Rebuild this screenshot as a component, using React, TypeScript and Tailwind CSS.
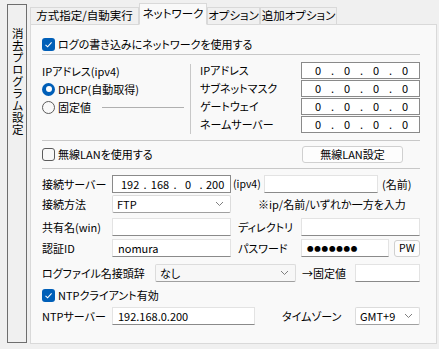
import React from 'react';

function CheckBox({ checked, label }: { checked?: boolean; label: string }) {
  return (
    <div className="flex items-center h-[16px]">
      {checked ? (
        <span className="w-[13px] h-[13px] rounded-[3px] bg-[#005fb8] flex items-center justify-center">
          <svg width="9" height="9" viewBox="0 0 9 9">
            <path d="M1.5 4.8 L3.6 6.8 L7.6 2.3" fill="none" stroke="#fff" strokeWidth="1.1" />
          </svg>
        </span>
      ) : (
        <span className="w-[13px] h-[13px] rounded-[3px] border border-[#5c5c5c] bg-[#f9f9f9]" />
      )}
      <span className="ml-[3px]">{label}</span>
    </div>
  );
}

function Radio({ checked, label }: { checked?: boolean; label: string }) {
  return (
    <div className="flex items-center h-[18px]">
      {checked ? (
        <span className="w-[13px] h-[13px] rounded-full bg-[#005fb8] flex items-center justify-center">
          <span className="w-[6px] h-[6px] rounded-full bg-white" />
        </span>
      ) : (
        <span className="w-[13px] h-[13px] rounded-full border border-[#5c5c5c] bg-[#f9f9f9]" />
      )}
      <span className="ml-[3px]">{label}</span>
    </div>
  );
}

function IpBox() {
  return (
    <div className="w-[119px] h-[17px] bg-white border border-[#8a8a8a] flex items-center pl-[12px]">
      {['0', '0', '0', '0'].map((v, i) => (
        <React.Fragment key={i}>
          <span className="w-[8px] text-center">{v}</span>
          {i < 3 && <span className="w-[21px] text-center">.</span>}
        </React.Fragment>
      ))}
    </div>
  );
}

function TextBox({ w, value }: { w: string; value?: string }) {
  return (
    <div className={`${w} h-[18px] bg-white border border-[#e3e3e3] border-b-[#8a8a8a] flex items-center pl-[5px]`}>
      {value}
    </div>
  );
}

function Select({ w, value, gray }: { w: string; value: string; gray?: boolean }) {
  return (
    <div className={`${w} h-[18px] ${gray ? 'bg-[#f7f7f7]' : 'bg-white'} border border-[#dcdcdc] border-b-[#a0a0a0] rounded-[2px] flex items-center pl-[4px] pr-[6px]`}>
      <span className="flex-1">{value}</span>
      <svg width="9" height="6" viewBox="0 0 9 6">
        <path d="M1 1 L4.5 4.5 L8 1" fill="none" stroke="#707070" strokeWidth="0.9" />
      </svg>
    </div>
  );
}

export default function App() {
  const tabs = [
    { t: '方式指定/自動実行', w: 'w-[109px]' },
    { t: 'ネットワーク', w: 'w-[68px]' },
    { t: 'オプション', w: 'w-[53px]' },
    { t: '追加オプション', w: 'w-[77px]' },
  ];
  return (
    <div className="w-[439px] h-[349px] bg-[#f0f0f0] flex pt-[4px] pl-[7px] text-[11px] text-black font-['Noto_Sans_CJK_JP',sans-serif] [font-feature-settings:'palt'] leading-none whitespace-nowrap">
      {/* vertical side tab */}
      <div className="w-[20px] h-[339px] border border-[#6e6e6e] flex justify-center pt-[23px]">
        <span className="[writing-mode:vertical-rl] tracking-[0.5px] text-[11.5px]">消去プログラム設定</span>
      </div>

      <div className="ml-[3px] w-[407px] flex flex-col">
        {/* tab strip */}
        <div className="flex items-end h-[21px] -mb-px relative z-10">
          {tabs.map((tab, i) => (
            <div
              key={tab.t}
              className={
                i === 1
                  ? `${tab.w} h-[22px] bg-[#f9f9f9] border border-[#d9d9d9] border-b-[#f9f9f9] flex items-center justify-center text-[11.5px]`
                  : `${tab.w} h-[18px] bg-[#f0f0f0] border border-[#d9d9d9] flex items-center justify-center text-[11.5px]`
              }
            >
              {tab.t}
            </div>
          ))}
        </div>

        {/* panel */}
        <div className="w-[407px] h-[320px] bg-[#f9f9f9] border border-[#d9d9d9] pl-[11px] pt-[11px]">
          <CheckBox checked label="ログの書き込みにネットワークを使用する" />
          <div className="mt-[2px] w-[378px] border-t border-[#c8c8c8]" />

          {/* ip section */}
          <div className="mt-[7px] flex h-[74px]">
            <div className="w-[148px] flex flex-col">
              <div className="h-[18px] flex items-center">IPアドレス(ipv4)</div>
              <Radio checked label="DHCP(自動取得)" />
              <div className="flex items-center">
                <Radio label="固定値" />
                <div className="ml-[11px] w-[82px] border-t border-[#b0b0b0]" />
              </div>
            </div>
            <div className="mt-[2px] h-[70px] border-l border-[#c8c8c8]" />
            <div className="ml-[9px] flex flex-col gap-[1px]">
              {['IPアドレス', 'サブネットマスク', 'ゲートウェイ', 'ネームサーバー'].map((l) => (
                <div key={l} className="flex items-center h-[17px]">
                  <span className="w-[101px]">{l}</span>
                  <IpBox />
                </div>
              ))}
            </div>
          </div>

          <div className="mt-[4px] w-[378px] border-t border-[#c8c8c8]" />

          <div className="mt-[5px] flex items-center h-[16px]">
            <div className="w-[260px]"><CheckBox label="無線LANを使用する" /></div>
            <div className="w-[101px] h-[17px] bg-[#fdfdfd] border border-[#d0d0d0] rounded-[3px] flex items-center justify-center">
              無線LAN設定
            </div>
          </div>

          <div className="mt-[6px] w-[378px] border-t border-[#c8c8c8]" />

          {/* server */}
          <div className="mt-[6px] flex items-center h-[18px]">
            <span className="w-[70px]">接続サーバー</span>
            <div className="w-[119px] h-[18px] bg-white border border-[#8a8a8a] flex items-center pl-[8px]">
              <span className="w-[19px]">192</span>
              <span className="w-[10px] text-center">.</span>
              <span className="w-[20px] text-center">168</span>
              <span className="w-[10px] text-center">.</span>
              <span className="w-[16px] text-center">0</span>
              <span className="w-[10px] text-center">.</span>
              <span className="w-[20px]">200</span>
            </div>
            <span className="ml-[2px] w-[31px] text-[10.5px]">(ipv4)</span>
            <TextBox w="w-[114px]" />
            <span className="ml-[4px]">(名前)</span>
          </div>

          <div className="mt-[2px] flex items-center h-[18px]">
            <span className="w-[70px]">接続方法</span>
            <Select w="w-[119px]" value="FTP" />
            <span className="ml-[27px]">※ip/名前/いずれか一方を入力</span>
          </div>

          <div className="mt-[5px] flex items-center h-[18px]">
            <span className="w-[70px]">共有名(win)</span>
            <TextBox w="w-[119px]" />
            <span className="ml-[7px] w-[63px]">ディレクトリ</span>
            <TextBox w="w-[119px]" />
          </div>

          <div className="mt-[3px] flex items-center h-[18px]">
            <span className="w-[70px]">認証ID</span>
            <TextBox w="w-[119px]" value="nomura" />
            <span className="ml-[7px] w-[63px]">パスワード</span>
            <div className="w-[88px] h-[18px] bg-white border border-[#e3e3e3] border-b-[#8a8a8a] flex items-center pl-[5px] text-[6.5px] tracking-[0.8px]">
              ●●●●●●●
            </div>
            <div className="ml-[5px] w-[26px] h-[17px] bg-[#fdfdfd] border border-[#d0d0d0] rounded-[3px] flex items-center justify-center text-[10.5px]">
              PW
            </div>
          </div>

          <div className="mt-[7px] flex items-center h-[18px]">
            <span className="w-[113px]">ログファイル名接頭辞</span>
            <Select w="w-[141px]" value="なし" gray />
            <span className="ml-[6px] w-[53px]">→固定値</span>
            <TextBox w="w-[65px]" />
          </div>

          <div className="mt-[5px]">
            <CheckBox checked label="NTPクライアント有効" />
          </div>

          <div className="mt-[4px] flex items-center h-[18px]">
            <span className="w-[70px]">NTPサーバー</span>
            <TextBox w="w-[143px]" value="192.168.0.200" />
            <span className="ml-[27px] w-[73px]">タイムゾーン</span>
            <Select w="w-[65px]" value="GMT+9" />
          </div>
        </div>
      </div>
    </div>
  );
}
